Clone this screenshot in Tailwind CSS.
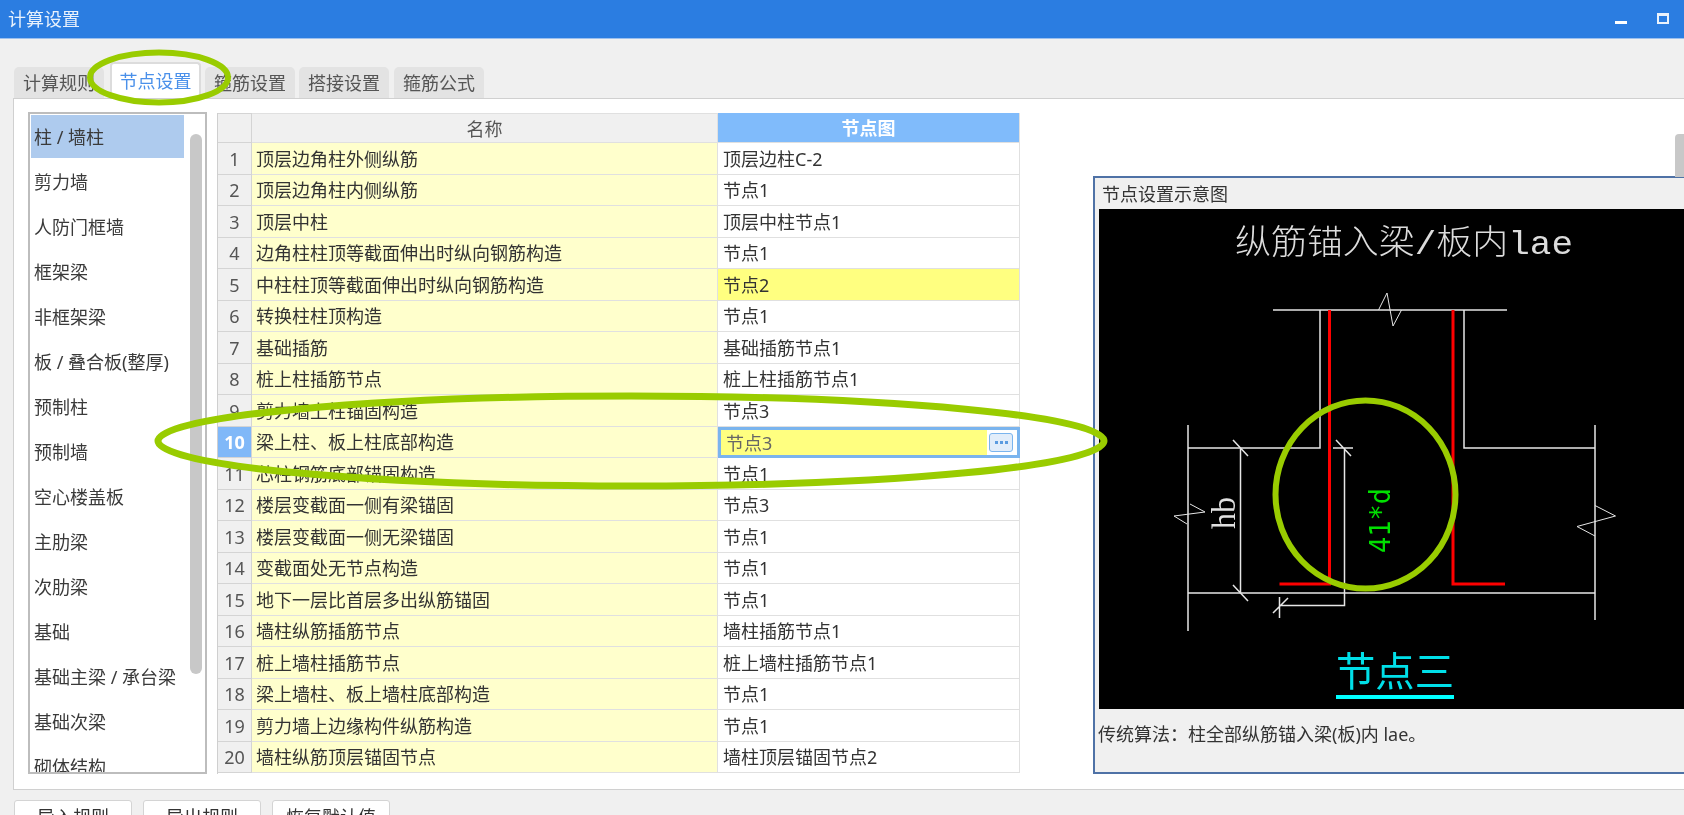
<!DOCTYPE html>
<html lang="zh">
<head>
<meta charset="utf-8">
<title>计算设置</title>
<script src="https://cdn.jsdelivr.net/npm/@tailwindcss/browser@4"></script>
</head>
<body class="m-0">
<div class="relative w-[1684px] h-[815px] overflow-hidden bg-[#f0f0f0] flex flex-col text-[18px] leading-none text-[#333] font-['Noto_Sans','Noto_Sans_CJK_SC',sans-serif] blur-[0.35px]">

  <!-- Title bar -->
  <div class="h-[39px] shrink-0 bg-[#2b7de1] border-b border-[#9cc0ee] flex items-center pl-[8px] pr-[15px] text-white">
    <span class="text-[#e8f1fc]">计算设置</span>
    <div class="ml-auto flex items-center gap-[30px]">
      <span class="block w-[12px] h-[3px] bg-white mt-[6px]"></span>
      <span class="block w-[12px] h-[11px] border-2 border-t-[3px] border-white/90 mb-[2px]"></span>
    </div>
  </div>

  <!-- Tabs -->
  <div class="h-[36px] mt-[23px] shrink-0 pl-[14px] flex items-end">
    <div class="w-[90px] h-[31px] bg-[#e3e3e3] rounded-t-[5px] flex items-center justify-center text-[#555]">计算规则</div>
    <div class="w-[91px] h-[36px] ml-[6px] bg-white rounded-t-[4px] border-x-2 border-t-2 border-[#dcdcdc] flex items-center justify-center text-[#4a90ea] relative z-10">节点设置</div>
    <div class="w-[90px] h-[31px] ml-[4px] bg-[#e3e3e3] rounded-t-[5px] flex items-center justify-center text-[#555]">箍筋设置</div>
    <div class="w-[90px] h-[31px] ml-[4px] bg-[#e3e3e3] rounded-t-[5px] flex items-center justify-center text-[#555]">搭接设置</div>
    <div class="w-[90px] h-[31px] ml-[5px] bg-[#e3e3e3] rounded-t-[5px] flex items-center justify-center text-[#555]">箍筋公式</div>
  </div>

  <!-- Main panel -->
  <div class="relative h-[692px] shrink-0 ml-[13px] w-[1700px] bg-white border border-[#d0d0d0] pl-[14px] pt-[13px] flex items-start overflow-hidden">

    <!-- Category list -->
    <div class="relative w-[179px] h-[662px] shrink-0 border-2 border-[#bdbdbd] pl-[1px] pt-[1px] overflow-hidden text-[#3a3a3a]">
      <div class="h-[43px] mb-[2px] w-[153px] pl-[3px] flex items-center bg-[#aecbee]">柱 / 墙柱</div>
      <div class="h-[43px] mb-[2px] pl-[3px] flex items-center">剪力墙</div>
      <div class="h-[43px] mb-[2px] pl-[3px] flex items-center">人防门框墙</div>
      <div class="h-[43px] mb-[2px] pl-[3px] flex items-center">框架梁</div>
      <div class="h-[43px] mb-[2px] pl-[3px] flex items-center">非框架梁</div>
      <div class="h-[43px] mb-[2px] pl-[3px] flex items-center">板 / 叠合板(整厚)</div>
      <div class="h-[43px] mb-[2px] pl-[3px] flex items-center">预制柱</div>
      <div class="h-[43px] mb-[2px] pl-[3px] flex items-center">预制墙</div>
      <div class="h-[43px] mb-[2px] pl-[3px] flex items-center">空心楼盖板</div>
      <div class="h-[43px] mb-[2px] pl-[3px] flex items-center">主肋梁</div>
      <div class="h-[43px] mb-[2px] pl-[3px] flex items-center">次肋梁</div>
      <div class="h-[43px] mb-[2px] pl-[3px] flex items-center">基础</div>
      <div class="h-[43px] mb-[2px] pl-[3px] flex items-center">基础主梁 / 承台梁</div>
      <div class="h-[43px] mb-[2px] pl-[3px] flex items-center">基础次梁</div>
      <div class="h-[43px] mb-[2px] pl-[3px] flex items-center">砌体结构</div>
      <div class="absolute left-[160px] top-[20px] w-[12px] h-[540px] rounded-full bg-[#c8c8c8]"></div>
    </div>

    <!-- Table -->
    <div class="w-[803px] h-[661px] ml-[10px] mt-[1px] shrink-0 grid grid-cols-[34px_466px_302px] grid-rows-[30px] auto-rows-[31.5px] border-l border-[#cfcfcf] [&>div]:flex [&>div]:items-center [&>div]:pt-[1px] [&>div]:border-b [&>div]:border-r [&>div]:border-[#e0e0e0] [&>div:nth-child(3n+1)]:bg-[#f0f0f0] [&>div:nth-child(3n+1)]:justify-center [&>div:nth-child(3n+1)]:text-[#555] [&>div:nth-child(3n+1)]:border-[#d4d4d4] [&>div:nth-child(3n+2)]:bg-[#ffffcc] [&>div:nth-child(3n+2)]:pl-[4px] [&>div:nth-child(3n)]:pl-[5px]">
      <div class="!bg-[#f0f0f0] border-t border-[#cfcfcf]"></div>
      <div class="!bg-[#f0f0f0] !justify-center !pl-0 text-[#555] border-t border-[#cfcfcf]">名称</div>
      <div class="!bg-[#80bbfb] justify-center !pl-0 text-white font-bold">节点图</div>

      <div>1</div><div>顶层边角柱外侧纵筋</div><div>顶层边柱C-2</div>
      <div>2</div><div>顶层边角柱内侧纵筋</div><div>节点1</div>
      <div>3</div><div>顶层中柱</div><div>顶层中柱节点1</div>
      <div>4</div><div>边角柱柱顶等截面伸出时纵向钢筋构造</div><div>节点1</div>
      <div>5</div><div>中柱柱顶等截面伸出时纵向钢筋构造</div><div class="bg-[#ffff80]">节点2</div>
      <div>6</div><div>转换柱柱顶构造</div><div>节点1</div>
      <div>7</div><div>基础插筋</div><div>基础插筋节点1</div>
      <div>8</div><div>桩上柱插筋节点</div><div>桩上柱插筋节点1</div>
      <div>9</div><div>剪力墙上柱锚固构造</div><div>节点3</div>
      <div class="!bg-[#80b8f8] !text-white font-bold">10</div><div>梁上柱、板上柱底部构造</div>
      <div class="!p-0 !border-[3px] !border-[#7ab4ee] bg-white"><span class="flex-1 self-stretch flex items-center pl-[5px] pt-[1px] bg-[#ffff80] text-[#666]">节点3</span><span class="w-[24px] h-[19px] ml-[2px] mr-[4px] rounded-[3px] border border-[#7ab4ee] bg-[#e2edfa] flex items-center justify-center gap-[2px]"><i class="block w-[3px] h-[3px] bg-[#5b9be0]"></i><i class="block w-[3px] h-[3px] bg-[#5b9be0]"></i><i class="block w-[3px] h-[3px] bg-[#5b9be0]"></i></span></div>
      <div>11</div><div>芯柱钢筋底部锚固构造</div><div>节点1</div>
      <div>12</div><div>楼层变截面一侧有梁锚固</div><div>节点3</div>
      <div>13</div><div>楼层变截面一侧无梁锚固</div><div>节点1</div>
      <div>14</div><div>变截面处无节点构造</div><div>节点1</div>
      <div>15</div><div>地下一层比首层多出纵筋锚固</div><div>节点1</div>
      <div>16</div><div>墙柱纵筋插筋节点</div><div>墙柱插筋节点1</div>
      <div>17</div><div>桩上墙柱插筋节点</div><div>桩上墙柱插筋节点1</div>
      <div>18</div><div>梁上墙柱、板上墙柱底部构造</div><div>节点1</div>
      <div>19</div><div>剪力墙上边缘构件纵筋构造</div><div>节点1</div>
      <div>20</div><div>墙柱纵筋顶层锚固节点</div><div>墙柱顶层锚固节点2</div>
    </div>

    <!-- Preview -->
    <div class="w-[600px] h-[598px] ml-[73px] mt-[64px] shrink-0 bg-[#f0f0f0] border-2 border-[#4f72a6] flex flex-col">
      <div class="h-[31px] shrink-0 pl-[7px] flex items-center">节点设置示意图</div>
      <svg class="block ml-[4px] w-[590px] h-[500px] shrink-0 bg-black" viewBox="1099 209 590 500" fill="none">
        <text x="1235" y="254" textLength="338" lengthAdjust="spacingAndGlyphs" font-size="34" fill="#dcdcdc" font-weight="300" font-family="'Liberation Mono','Noto Sans CJK SC',monospace">纵筋锚入梁/板内lae</text>
        <g stroke="#e6e6e6" stroke-width="1.5">
          <path d="M1273 310H1507"/>
          <path d="M1320 310V448H1188M1188 425V631M1464 310V448H1595M1595 425V620M1188 593H1595"/>
          <path d="M1240.5 448V593M1233 440L1248 456M1233 585L1248 601"/>
          <path d="M1333 448H1353M1344.5 448V605.5H1279.5M1279.5 597V618M1273 613L1288 598M1336 440L1351 456"/>
        </g>
        <g stroke="#e6e6e6" stroke-width="1">
          <path d="M1378.5 310L1387 293L1393 326L1401.5 310"/>
          <path d="M1190 504L1205 512L1174 516L1187 524"/>
          <path d="M1595 505.5L1615.5 516L1577 526.5L1595 536"/>
        </g>
        <path d="M1329.5 310V584H1279.5M1453 310V584H1505" stroke="#ff0000" stroke-width="3"/>
        <text transform="translate(1235 529) rotate(-90)" font-size="33" fill="#e0e0e0" font-family="'Liberation Serif',serif" textLength="32" lengthAdjust="spacingAndGlyphs">hb</text>
        <text transform="translate(1390 553) rotate(-90)" font-size="29" fill="#00e000" font-family="'DejaVu Sans Mono',monospace" textLength="65" lengthAdjust="spacingAndGlyphs">41*d</text>
        <text x="1336" y="686" font-size="40" textLength="118" lengthAdjust="spacingAndGlyphs" fill="#00dfe8" font-family="'Noto Sans CJK SC',sans-serif">节点三</text>
        <rect x="1336" y="695" width="118" height="4" fill="#00ffff"/>
      </svg>
      <div class="pl-[3px] pt-[16px]">传统算法：柱全部纵筋锚入梁(板)内 lae。</div>
    </div>

    <!-- Right scrollbar -->
    <div class="absolute left-[1661px] top-[35px] w-[12px] h-[43px] bg-[#c8c8c8] rounded-t-[4px]"></div>
  </div>

  <!-- Footer buttons -->
  <div class="mt-[10px] pl-[14px] flex gap-[11px] text-[#333]">
    <button class="w-[118px] h-[34px] bg-white border border-[#d4d4d4] rounded-[3px] shrink-0">导入规则</button>
    <button class="w-[118px] h-[34px] bg-white border border-[#d4d4d4] rounded-[3px] shrink-0">导出规则</button>
    <button class="w-[118px] h-[34px] bg-white border border-[#d4d4d4] rounded-[3px] shrink-0">恢复默认值</button>
  </div>

  <!-- Green hand-drawn annotations over the screenshot -->
  <svg class="absolute left-0 top-0 w-[1684px] h-[815px] pointer-events-none z-20" viewBox="0 0 1684 815" fill="none">
    <ellipse cx="159" cy="77.5" rx="69" ry="25" stroke="#99cc00" stroke-width="6"/>
    <ellipse cx="631" cy="441" rx="473" ry="45" stroke="#99cc00" stroke-width="7"/>
    <ellipse cx="1365.5" cy="494.5" rx="90" ry="94" stroke="#99cc00" stroke-width="6"/>
  </svg>
</div>
</body>
</html>
